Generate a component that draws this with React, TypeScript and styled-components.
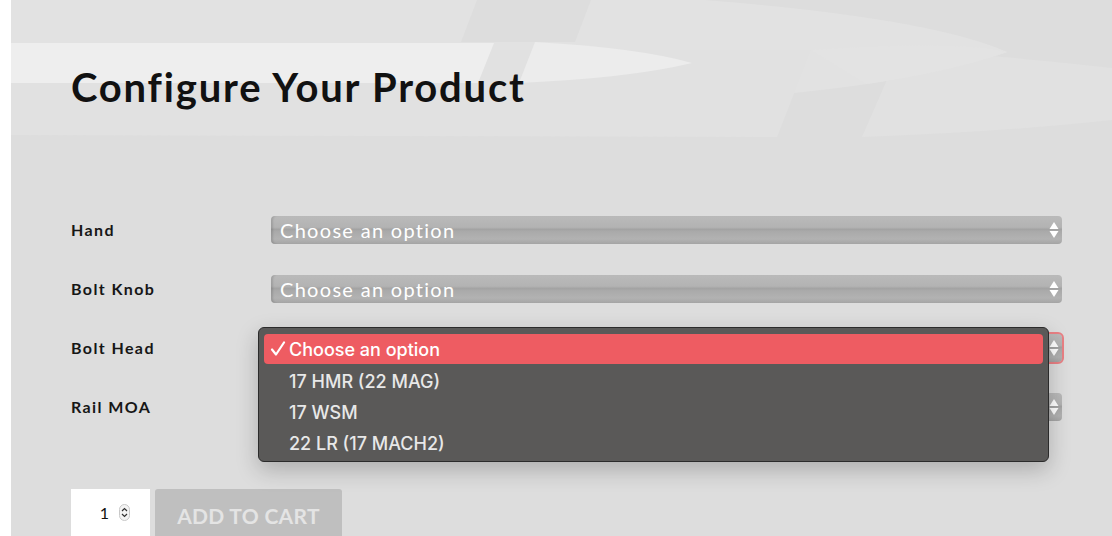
import React from "react";
import styled, { createGlobalStyle } from "styled-components";

const Global = createGlobalStyle`
  html, body { margin: 0; padding: 0; background: #ffffff; }
  * { box-sizing: border-box; }
`;

const fields = ["Hand", "Bolt Knob", "Bolt Head", "Rail MOA"];
const options = ["Choose an option", "17 HMR (22 MAG)", "17 WSM", "22 LR (17 MACH2)"];
// selects whose text sits under the open list
const covered = ["Bolt Head", "Rail MOA"];

function Decor() {
  return (
    <DecorSvg viewBox="11 0 1101 140" width={1101} height={140}>
      <path d="M11 0 H705 Q930 18 1007 52 Q880 98 560 107 L11 110 Z" fill="#e2e2e2" />
      <polygon points="477,0 591,0 575,42 461,42" fill="#dddddd" />
      <polygon points="11,50 811,50 777,137 11,135" fill="#e1e1e1" />
      <path d="M900 50 Q1000 55 1112 68 V120 Q1000 132 862 137 Z" fill="#e1e1e1" />
      <path d="M811 50 Q960 40 1007 52 Q950 72 866 84 Z" fill="#e3e3e3" />
      <polygon points="11,43 494,43 478,83 11,83" fill="#eeeeee" />
      <path d="M535 42 Q640 48 692 63 Q630 78 519 83 Z" fill="#ececec" />
    </DecorSvg>
  );
}

function Arrows() {
  return (
    <ArrowIcon viewBox="0 0 10 20" width={10} height={20}>
      <polygon points="5,2 9.5,9 0.5,9" fill="#ffffff" />
      <polygon points="0.5,11 9.5,11 5,18" fill="#ffffff" />
    </ArrowIcon>
  );
}

function CheckMark() {
  return (
    <CheckSvg viewBox="0 0 16 16" width={16} height={16}>
      <path d="M2 8.5 L6 13.5 L14 1.5" fill="none" stroke="#ffffff" strokeWidth="2.2" strokeLinecap="round" strokeLinejoin="round" />
    </CheckSvg>
  );
}

export default function App() {
  return (
    <>
      <Global />
      <Page>
        <Decor />
        <Content>
          <Title>Configure Your Product</Title>
          <Form>
            {fields.map((f) => (
              <React.Fragment key={f}>
                <Label>{f}</Label>
                <SelectBox $focused={f === "Bolt Head"}>
                  <SelectText $hidden={covered.includes(f)}>Choose an option</SelectText>
                  <Arrows />
                  {f === "Bolt Head" && (
                    <Popup>
                      {options.map((o, i) => (
                        <Option key={o} $active={i === 0}>
                          <CheckSlot>{i === 0 && <CheckMark />}</CheckSlot>
                          {o}
                        </Option>
                      ))}
                    </Popup>
                  )}
                </SelectBox>
              </React.Fragment>
            ))}
          </Form>
          <CartRow>
            <Qty>
              <span>1</span>
              <Spinner viewBox="0 0 11 17" width={11} height={17}>
                <rect x="0.5" y="0.5" width="10" height="16" rx="5" fill="#f4f4f4" stroke="#c8c8c8" />
                <path d="M3 7 L5.5 4.5 L8 7" fill="none" stroke="#333" strokeWidth="1.2" />
                <path d="M3 10 L5.5 12.5 L8 10" fill="none" stroke="#333" strokeWidth="1.2" />
              </Spinner>
            </Qty>
            <CartButton>ADD TO CART</CartButton>
          </CartRow>
        </Content>
      </Page>
    </>
  );
}

const Page = styled.div`
  position: relative;
  margin-left: 11px;
  height: 536px;
  overflow: hidden;
  background: #dddddd;
`;

const DecorSvg = styled.svg`
  position: absolute;
  top: 0;
  left: 0;
  z-index: 0;
`;

const Content = styled.div`
  position: relative;
  z-index: 1;
  padding: 63px 0 0 60px;
`;

const Title = styled.h1`
  margin: 0;
  font-family: Lato, "Liberation Sans", sans-serif;
  font-weight: 700;
  font-size: 40px;
  line-height: 48px;
  letter-spacing: 1.8px;
  color: #111111;
`;

const Form = styled.div`
  margin-top: 105px;
  display: grid;
  grid-template-columns: 200px 791px;
  row-gap: 31px;
  align-items: center;
`;

const Label = styled.div`
  padding-bottom: 2px;
  font-family: Lato, "Liberation Sans", sans-serif;
  font-weight: 700;
  font-size: 16px;
  letter-spacing: 1.4px;
  color: #161616;
`;

const SelectBox = styled.div<{ $focused?: boolean }>`
  position: relative;
  height: 28px;
  display: flex;
  align-items: center;
  justify-content: space-between;
  padding: 0 3px 0 9px;
  border-radius: 4px;
  background: linear-gradient(
    to bottom,
    #bababa 0%,
    #b3b3b3 40%,
    #a3a3a3 48%,
    #aaaaaa 56%,
    #b2b2b2 82%,
    #a5a5a5 100%
  );
  box-shadow: inset 3px 0 2px -1px rgba(0, 0, 0, 0.12);
  outline: ${(p) => (p.$focused ? "2px solid rgba(236, 96, 102, 0.75)" : "none")};
  outline-offset: 0;
`;

const SelectText = styled.span<{ $hidden?: boolean }>`
  visibility: ${(p) => (p.$hidden ? "hidden" : "visible")};
  font-family: Lato, "Liberation Sans", sans-serif;
  font-size: 20px;
  letter-spacing: 1.3px;
  color: #ffffff;
  line-height: 28px;
`;

const ArrowIcon = styled.svg`
  display: block;
`;

const Popup = styled.div`
  position: absolute;
  top: -7px;
  left: -13px;
  width: 791px;
  height: 135px;
  padding: 6px 5px 5px;
  background: #5a5958;
  border: 1px solid #2b2b2b;
  border-radius: 6px;
  box-shadow: 0 8px 22px rgba(0, 0, 0, 0.22);
  z-index: 5;
`;

const Option = styled.div<{ $active?: boolean }>`
  height: ${(p) => (p.$active ? "30px" : "31px")};
  margin-bottom: ${(p) => (p.$active ? "1px" : "0")};
  display: flex;
  align-items: center;
  padding-left: 5px;
  padding-top: ${(p) => (p.$active ? "0" : "2px")};
  border-radius: 4px;
  background: ${(p) => (p.$active ? "#ee5c62" : "transparent")};
  font-family: Inter, "Liberation Sans", sans-serif;
  font-size: 18px;
  font-weight: 500;
  color: ${(p) => (p.$active ? "#ffffff" : "#e8e8e8")};
`;

const CheckSlot = styled.span`
  width: 20px;
  display: flex;
  align-items: center;
`;

const CheckSvg = styled.svg`
  display: block;
  margin-left: 1px;
`;

const CartRow = styled.div`
  margin-top: 68px;
  display: flex;
  gap: 5px;
`;

const Qty = styled.div`
  width: 79px;
  height: 50px;
  background: #ffffff;
  display: flex;
  align-items: center;
  justify-content: flex-end;
  gap: 10px;
  padding: 0 20px 4px 0;
  font-family: Lato, "Liberation Sans", sans-serif;
  font-size: 16px;
  color: #111;
`;

const Spinner = styled.svg`
  display: block;
`;

const CartButton = styled.div`
  width: 187px;
  height: 50px;
  background: #bfbfbf;
  border-radius: 3px 3px 0 0;
  display: flex;
  justify-content: center;
  padding-top: 14px;
  font-family: Lato, "Liberation Sans", sans-serif;
  font-weight: 700;
  font-size: 21px;
  color: #e4e4e4;
  letter-spacing: 0.3px;
`;
